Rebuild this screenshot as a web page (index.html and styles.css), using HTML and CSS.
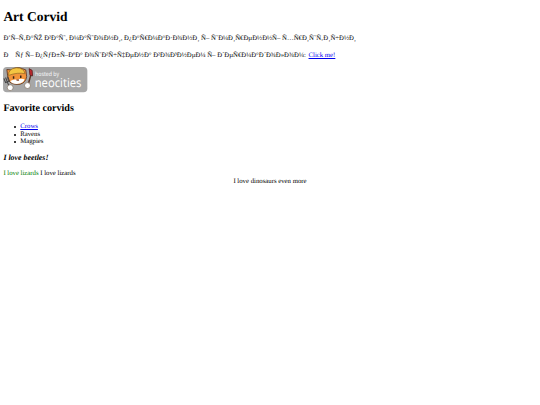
FILE: index.html
```
<!DOCTYPE html>
<html lang="en">
<head>
<meta charset="UTF-8">
<title>Art Corvid</title>
<link rel="stylesheet" href="styles.css">
</head>
<body>

<h1>Art Corvid</h1>

<p class="intro">Ð’Ñ–Ñ‚Ð°ÑŽ Ð²Ð°Ñ˜, Ð¼Ð°Ñ˜Ð¾Ð½Ð¸, Ð¿Ð°Ñ€Ð¼Ð°Ð·Ð¾Ð½Ð¸ Ñ– Ñ˜Ð¼Ð¸Ñ€ÐµÐ½Ð½Ñ– Ñ…Ñ€Ð¸Ñ˜Ñ‚Ð¸Ñ÷Ð½Ð¸</p>
<p class="intro link">Ð&#x90; Ñƒ Ñ– Ð¿ÑƒÐ±Ñ–ÐºÐ° Ð¾Ñ˜Ð²Ñ÷Ñ‡ÐµÐ½Ð° Ð²Ð¾Ð³Ð½ÐµÐ¼ Ñ– Ð´ÐµÑ€Ð¼Ð°Ð´Ð¾Ð»Ð¾Ð¼: <a href="#">Click me!</a></p>

<svg class="badge" viewBox="0 0 200 60">
  <rect x="0" y="0" width="200" height="60" rx="9" fill="#a7a7a7"/>
  <!-- cat -->
  <path d="M11 21 L9 6 L21 7 Q32 -2 46 4 L54 7 L56 23 Q54 37 40 41 Q18 43 12 30 Z" fill="#f2943a" stroke="#5a3520" stroke-width="2"/>
  <path d="M13 20 Q13 3 32 2 Q49 2 52 16 Q35 12 13 20 Z" fill="#f4c542" stroke="#8a6020" stroke-width="1.5"/>
  <path d="M17 33 Q25 28 33 30 Q43 26 51 29 Q49 38 36 40 Q21 41 17 33 Z" fill="#fff"/>
  <path d="M25 22 v6 M42 20 v6" stroke="#3a2418" stroke-width="3.5"/>
  <path d="M32 31 h6" stroke="#7a3a20" stroke-width="3"/>
  <!-- fork and brush -->
  <path d="M2 27 L6 37 L15 33 L11 23 M6 25 L16 50" fill="none" stroke="#444" stroke-width="2.5"/>
  <path d="M67 15 L59 44" stroke="#5a3525" stroke-width="3.5"/>
  <path d="M64 20 L62 4 L69 8 L70 21 Z" fill="#c0272d" stroke="#5a2020" stroke-width="2"/>
  <circle cx="17" cy="49" r="7" fill="#fff" stroke="#765" stroke-width="1.5"/>
  <circle cx="58" cy="44" r="7" fill="#fff" stroke="#765" stroke-width="1.5"/>
  <text class="hosted" x="76" y="22" textLength="57" lengthAdjust="spacingAndGlyphs">hosted by</text>
  <text class="neocities" x="75" y="47.5" textLength="111" lengthAdjust="spacingAndGlyphs">neocities</text>
</svg>

<h2>Favorite corvids</h2>
<ul>
  <li><a href="#">Crows</a></li>
  <li>Ravens</li>
  <li>Magpies</li>
</ul>

<h3><em>I love beetles!</em></h3>

<div><span class="green">I love lizards</span> I love lizards</div>
<div class="center">I love dinosaurs even more</div>

</body>
</html>
```
FILE: styles.css
```
body {
  margin: 3.375px;
  font-family: "Liberation Serif", "Times New Roman", serif;
  font-size: 6.75px;
  line-height: 7.6px;
  text-rendering: geometricPrecision;
  color: #000;
}
h1 {
  margin: 5.8px 0 8.9px;
  font-size: 13.5px;
  line-height: 15.6px;
}
h2 {
  margin: 10.5px 0 8.6px;
  font-size: 10.125px;
  line-height: 11.4px;
}
h3 {
  margin: 7px 0 7.8px;
  font-size: 7.9px;
  line-height: 9.3px;
}
.intro {
  margin: 6.75px 0;
  line-height: 10.1px;
  white-space: nowrap;
}
.link a {
  margin-left: 1px;
}
.badge {
  display: block;
  width: 84.4px;
  height: 25.3px;
}
.hosted {
  font: 14px "Open Sans", sans-serif;
  fill: #fff;
}
.neocities {
  font: 29px "Open Sans", sans-serif;
  fill: #fff;
}
ul {
  margin: 6.75px 0;
  padding-left: 10.2px;
  list-style: none;
}
li {
  display: flex;
  align-items: center;
}
li::before {
  content: "";
  width: 2px;
  height: 2px;
  margin-right: 4.7px;
  border-radius: 50%;
  background: #000;
}
a {
  color: #0000ee;
}
.green {
  color: green;
}
.center {
  text-align: center;
}
```
